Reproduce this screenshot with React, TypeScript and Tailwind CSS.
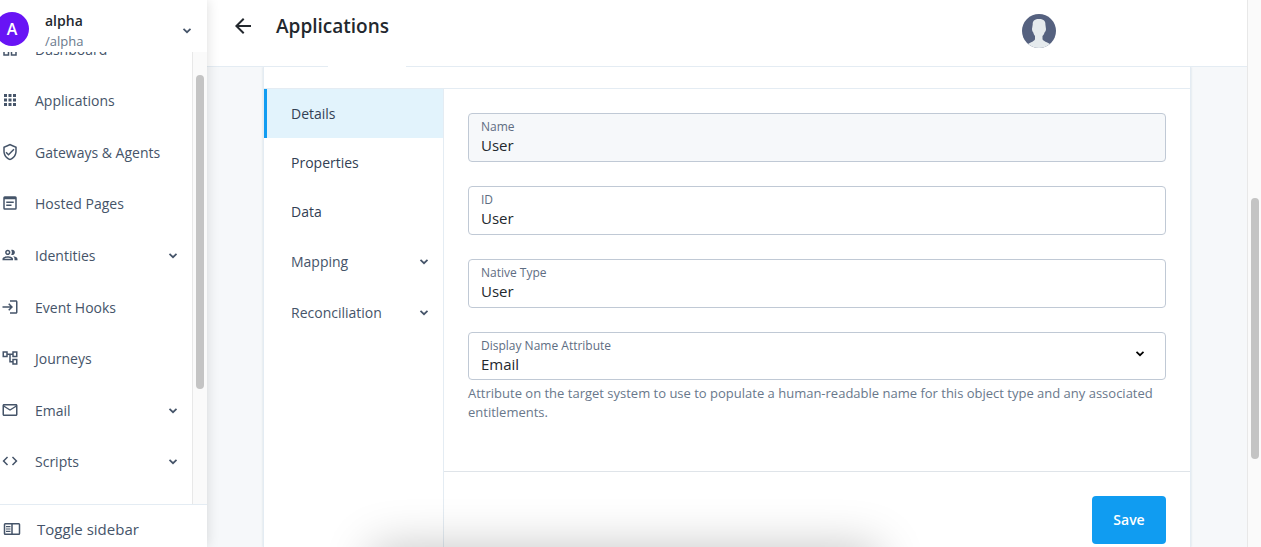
import type { ReactNode } from "react";
import {
  MdApps,
  MdArrowBack,
  MdCode,
  MdLogin,
  MdOutlineAccountTree,
  MdOutlineEmail,
  MdOutlineVerifiedUser,
} from "react-icons/md";

const DashboardIcon = () => (
  <svg width="18" height="18" viewBox="0 0 24 24" fill="currentColor" fillRule="evenodd" aria-hidden="true">
    <path d="M3 3h8v8H3zm2 2v4h4V5zM13 3h8v8h-8zm2 2v4h4V5zM3 13h8v8H3zm2 2v4h4v-4zM13 13h8v8h-8zm2 2v4h4v-4z" />
  </svg>
);

const PeopleIcon = () => (
  <svg width="18" height="18" viewBox="0 0 24 24" fill="currentColor" fillRule="evenodd" aria-hidden="true">
    <path d="M9 13.750c-2.340 0-7 1.170-7 3.500V19h14v-1.750c0-2.330-4.660-3.500-7-3.500zM4.340 17c.84-.58 2.870-1.250 4.660-1.250s3.820.67 4.660 1.250z" />
    <path d="M9 12c1.930 0 3.500-1.570 3.500-3.500S10.930 5 9 5 5.500 6.570 5.500 8.500 7.070 12 9 12zm0-5c.83 0 1.500.67 1.500 1.500S9.830 10 9 10s-1.500-.67-1.500-1.500S8.170 7 9 7z" />
    <path d="M16.040 13.810c1.160.84 1.960 1.960 1.960 3.440V19h4v-1.750c0-2.020-3.500-3.170-5.960-3.440zM15 12c1.930 0 3.500-1.570 3.500-3.500S16.930 5 15 5c-.54 0-1.040.13-1.500.35.63.89 1 1.980 1 3.150s-.37 2.260-1 3.150c.46.22.96.35 1.500.35z" />
  </svg>
);

const PageIcon = () => (
  <svg width="18" height="18" viewBox="0 0 24 24" fill="currentColor" aria-hidden="true">
    <path d="M19 3H5a2 2 0 0 0-2 2v14a2 2 0 0 0 2 2h14a2 2 0 0 0 2-2V5a2 2 0 0 0-2-2zm0 16H5V7h14v12zM7 10h10v2H7zm0 4h7v2H7z" />
  </svg>
);

const SidebarIcon = () => (
  <svg width="18" height="18" viewBox="0 0 24 24" fill="currentColor" aria-hidden="true">
    <path d="M21 4H3a2 2 0 0 0-2 2v12a2 2 0 0 0 2 2h18a2 2 0 0 0 2-2V6a2 2 0 0 0-2-2zM11 18H3V6h8v12zm10 0h-8V6h8v12zM4 8h6v1.500H4zm0 3.200h6v1.500H4zm0 3.200h6v1.500H4z" />
  </svg>
);

const Chevron = () => (
  <svg width="16" height="16" viewBox="0 0 16 16" fill="none" stroke="currentColor" strokeWidth="1.700" aria-hidden="true">
    <path d="M4.500 5.800 8 9.200l3.500-3.400" />
  </svg>
);

const UserAvatar = () => (
  <svg width="34" height="34" viewBox="0 0 34 34" aria-hidden="true">
    <defs>
      <clipPath id="avatar">
        <circle cx="17" cy="17" r="17" />
      </clipPath>
    </defs>
    <g clipPath="url(#avatar)">
      <rect width="34" height="34" fill="#55617f" />
      <path
        d="M17 5c-4 0-6.500 1.500-6.300 5.500L10 15c0 2 .8 2.800 1.300 3.500.3 1.500 1 2.800 1.700 3.500v3c0 1.500-2 2.300-7 5V34h22v-4c-5-2.700-7.500-3.500-7.500-5v-3c1-1 1.700-2 2-3.500.6-.7 1.500-1.500 1.500-3.500l-.6-4.500C23.600 6.500 21 5 17 5z"
        fill="#e5eaed"
      />
    </g>
  </svg>
);

const NAV_LINKS: { label: string; icon: ReactNode; expandable?: boolean }[] = [
  { label: "Dashboard", icon: <DashboardIcon /> },
  { label: "Applications", icon: <MdApps size={18} /> },
  { label: "Gateways & Agents", icon: <MdOutlineVerifiedUser size={18} /> },
  { label: "Hosted Pages", icon: <PageIcon /> },
  { label: "Identities", icon: <PeopleIcon />, expandable: true },
  { label: "Event Hooks", icon: <MdLogin size={18} /> },
  { label: "Journeys", icon: <MdOutlineAccountTree size={18} /> },
  { label: "Email", icon: <MdOutlineEmail size={18} />, expandable: true },
  { label: "Scripts", icon: <MdCode size={18} />, expandable: true },
];

const FIELDS = [
  { id: "name", label: "Name", value: "User", readOnly: true },
  { id: "object-id", label: "ID", value: "User", readOnly: false },
  { id: "native-type", label: "Native Type", value: "User", readOnly: false },
];

const Sidebar = () => (
  <aside className="relative z-20 flex w-[207px] shrink-0 flex-col bg-white text-[#455469] shadow-[0_0_12px_rgba(0,0,0,0.14)]">
    <button type="button" className="flex h-[52px] shrink-0 items-center pt-2.5 pr-3 text-left">
      <span className="mb-1 -ml-[5px] flex size-[34px] items-center justify-center rounded-full bg-[#6814f5] text-base font-semibold text-white">
        A
      </span>
      <span className="flex flex-1 flex-col pl-4">
        <span className="text-sm leading-[21px] font-semibold text-[#23282e]">alpha</span>
        <span className="text-[13px] leading-[21px] text-[#69788b]">/alpha</span>
      </span>
      <Chevron />
    </button>

    <div className="flex min-h-0 flex-1">
      <nav className="flex flex-1 flex-col overflow-hidden">
        <ul className="-mt-7 flex flex-1 flex-col pb-4">
          {NAV_LINKS.map((link) => (
            <li key={link.label} className="flex flex-1">
              <a href="#" className="flex flex-1 items-center pr-[11px] pl-px text-sm">
                <span className="w-[34px] pb-0.5">{link.icon}</span>
                <span className="flex-1">{link.label}</span>
                {link.expandable && <Chevron />}
              </a>
            </li>
          ))}
        </ul>
      </nav>
      <div className="w-[15px] border-l border-[#e8e8e8] bg-[#fafafa] px-[3px] pt-[23px]">
        <div className="h-[314px] w-2 rounded-full bg-[#c4c4c4]" />
      </div>
    </div>

    <button
      type="button"
      className="flex h-[43px] shrink-0 items-center gap-4 border-t border-[#e4ecf3] pt-1.5 pl-[3px] text-[15px]"
    >
      <SidebarIcon />
      Toggle sidebar
    </button>
  </aside>
);

const ObjectNav = () => (
  <nav className="w-[180px] shrink-0 border-r border-[#e4ecf3] text-sm text-[#324054]">
    <a href="#" className="flex h-[49px] items-center border-l-3 border-[#109cf1] bg-[#e2f3fc] pl-6">
      Details
    </a>
    <a href="#" className="flex h-[49px] items-center pl-[27px]">
      Properties
    </a>
    <a href="#" className="flex h-[49px] items-center pl-[27px]">
      Data
    </a>
    {["Mapping", "Reconciliation"].map((label) => (
      <button
        key={label}
        type="button"
        className="flex h-[51px] w-full items-center justify-between pr-[11px] pl-[27px] text-[#455469]"
      >
        {label}
        <Chevron />
      </button>
    ))}
  </nav>
);

const DetailsForm = () => (
  <form className="flex flex-1 flex-col" onSubmit={(e) => e.preventDefault()}>
    <div className="flex flex-col gap-6 px-6 pt-6 pb-[49px]">
      {FIELDS.map((field) => (
        <div
          key={field.id}
          className={`flex h-[49px] flex-col rounded border border-[#c0c9d5] px-3 pt-1 ${
            field.readOnly ? "bg-[#f6f8fa]" : "bg-white"
          }`}
        >
          <label htmlFor={field.id} className="text-xs leading-[17px] text-[#5e6d82]">
            {field.label}
          </label>
          <input
            id={field.id}
            type="text"
            defaultValue={field.value}
            readOnly={field.readOnly}
            className="h-5 w-full bg-transparent text-[15px] leading-5 text-[#23282e] outline-none"
          />
        </div>
      ))}

      <div>
        <div className="relative flex h-12 flex-col rounded border border-[#c0c9d5] px-3 pt-1">
          <label htmlFor="display-name" className="text-xs leading-[17px] text-[#5e6d82]">
            Display Name Attribute
          </label>
          <select
            id="display-name"
            aria-describedby="display-name-help"
            className="h-5 w-full appearance-none bg-transparent text-[15px] leading-5 text-[#23282e] outline-none"
          >
            <option>Email</option>
          </select>
          <span className="pointer-events-none absolute top-[13px] right-[17px] text-black">
            <Chevron />
          </span>
        </div>
        <p id="display-name-help" className="pt-1 text-[13px] leading-[19px] text-[#69788b]">
          Attribute on the target system to use to populate a human-readable name for this object type and any
          associated entitlements.
        </p>
      </div>
    </div>

    <div className="flex justify-end border-t border-[#dfe4e9] p-6">
      <button type="submit" className="h-12 w-[74px] rounded bg-[#109cf1] text-sm font-semibold text-white">
        Save
      </button>
    </div>
  </form>
);

const App = () => {
  return (
    <div className="relative flex h-screen overflow-hidden bg-[#f6f8fa] font-['Open_Sans',sans-serif]">
      <Sidebar />

      <div className="flex min-w-0 flex-1 flex-col">
        <header className="relative z-10 flex h-[67px] shrink-0 items-center border-b border-[#e4ecf3] bg-white pr-[191px] pb-3.5 pl-6">
          <button type="button" aria-label="Back" className="text-[#23282e]">
            <MdArrowBack size={24} />
          </button>
          <h1 className="flex-1 pl-[21px] text-[19px] leading-7 font-semibold text-[#23282e]">Applications</h1>
          <button type="button" aria-label="User menu" className="pt-2.5">
            <UserAvatar />
          </button>
          {/* Active tab scrolled under the header */}
          <span className="absolute top-full left-[121px] h-px w-[78px] bg-white" />
        </header>

        <main className="flex min-h-0 flex-1 overflow-hidden px-14">
          <div className="flex flex-1 flex-col border-x border-[#e4ecf3] bg-white shadow-[0_0_2px_rgba(160,180,200,0.4)]">
            <div className="h-[22px] shrink-0 border-b border-[#e4ecf3]" />
            <div className="flex flex-1">
              <ObjectNav />
              <DetailsForm />
            </div>
          </div>
        </main>
      </div>

      {/* Page scrollbar */}
      <div className="w-3.5 shrink-0 border-l border-[#e8e8e8] bg-[#fafafa] px-[3px] pt-[198px]">
        <div className="h-[261px] w-2 rounded-full bg-[#c4c4c4]" />
      </div>

      {/* Shadow of the panel below the fold */}
      <div className="pointer-events-none absolute top-full left-[372px] z-30 h-20 w-[506px] shadow-[0_0_48px_rgba(0,0,0,0.23)]" />
    </div>
  );
};

export default App;
